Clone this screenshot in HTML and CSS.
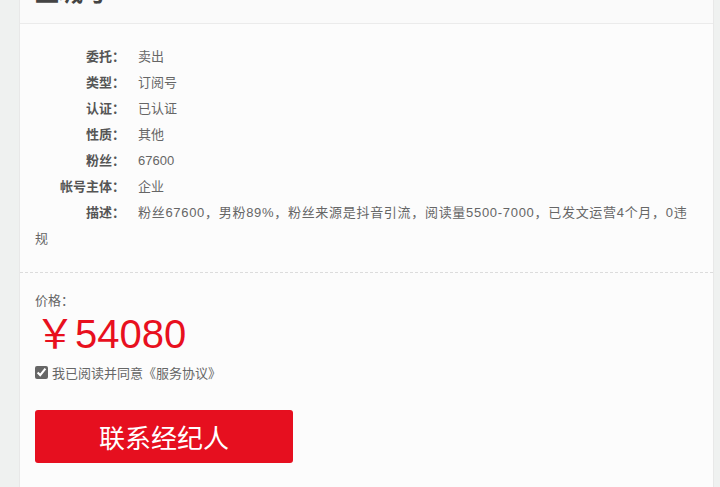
FILE: index.html
```html
<!DOCTYPE html>
<html lang="zh-CN">

<head>
    <meta charset="UTF-8">
    <meta name="viewport" content="width=device-width, initial-scale=1.0">
    <title>王城号</title>
    <link rel="stylesheet" href="styles.css">
</head>

<body>

    <!-- Account detail panel -->
    <div class="panel">
        <div class="panel-head">
            <h2>王城号</h2>
        </div>

        <div class="info">
            <p><span class="label">委托：</span>卖出</p>
            <p><span class="label">类型：</span>订阅号</p>
            <p><span class="label">认证：</span>已认证</p>
            <p><span class="label">性质：</span>其他</p>
            <p><span class="label">粉丝：</span>67600</p>
            <p><span class="label">帐号主体：</span>企业</p>
            <p class="desc"><span class="label">描述：</span>粉丝67600，男粉89%，粉丝来源是抖音引流，阅读量5500-7000，已发文运营4个月，0违规</p>
        </div>

        <!-- Price and contact -->
        <div class="buy">
            <div class="price-label">价格：</div>
            <div class="price">￥54080</div>
            <label class="agree">
                <input type="checkbox" checked> 我已阅读并同意《服务协议》
            </label>
            <button class="contact">联系经纪人</button>
        </div>
    </div>

</body>

</html>
```

FILE: styles.css
```css
body {
    font-family: "Liberation Sans", "Noto Sans CJK SC", sans-serif;
    background-color: #eff1f0;
    color: #666;
    font-size: 13px;
    margin: 0;
    padding: 0 6px 0 19px;
}

/* Panel */
.panel {
    background-color: #fcfcfc;
    border-left: 1px solid #e8e8e8;
    border-right: 1px solid #e8e8e8;
    margin-top: -37px;
    min-height: 530px;
}

.panel-head {
    background-color: #fafafa;
    border-bottom: 1px solid #ebebeb;
    padding: 14px 15px;
}

.panel-head h2 {
    margin: 0;
    font-size: 24px;
    line-height: 32px;
    color: #444;
    font-weight: bold;
}

/* Info rows */
.info {
    padding: 20px 16px 20px 15px;
    border-bottom: 1px dashed #dcdcdc;
}

.info p {
    margin: 0;
    line-height: 26px;
}

.desc {
    letter-spacing: 0.7px;
}

.label {
    display: inline-block;
    width: 90px;
    margin-right: 13px;
    text-align: right;
    color: #555;
    font-weight: bold;
    letter-spacing: 0;
}

/* Price block */
.buy {
    padding: 18px 15px 16px;
}

.price-label {
    line-height: 20px;
}

.price {
    color: #e8101e;
    font-size: 40px;
    line-height: 46px;
}

.agree {
    display: flex;
    align-items: center;
    gap: 4px;
    height: 20px;
    margin-top: 5px;
}

.agree input {
    margin: 0;
    width: 13px;
    height: 13px;
    accent-color: #666;
}

.contact {
    display: block;
    margin-top: 28px;
    width: 258px;
    height: 53px;
    background-color: #e60f1f;
    color: white;
    border: none;
    border-radius: 3px;
    font-family: "Noto Sans CJK SC", sans-serif;
    font-size: 26px;
    cursor: pointer;
}
```
